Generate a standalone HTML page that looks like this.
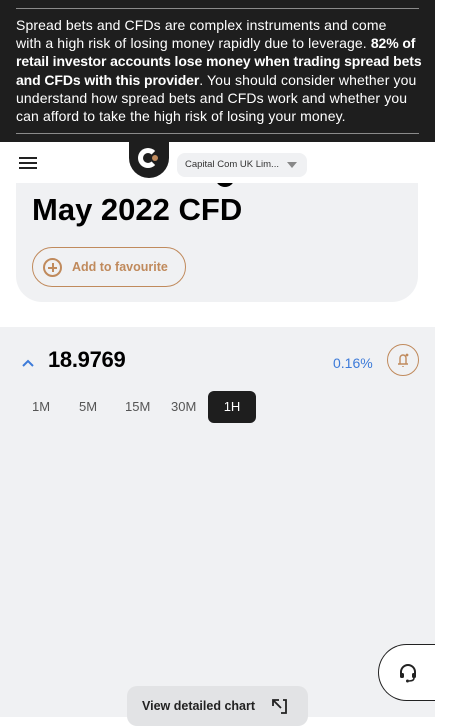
<!DOCTYPE html>
<html><head><meta charset="utf-8"><style>
*{margin:0;padding:0;box-sizing:border-box}
body{width:450px;height:717px;overflow:hidden;background:#fff;font-family:"Liberation Sans",sans-serif;position:relative}
.banner{position:absolute;left:0;top:0;width:435px;height:142px;background:#1e1e1e;color:#fff}
.hl{position:absolute;left:16px;width:403px;height:1px;background:#8a8a8a}
.btxt{position:absolute;left:16px;top:16px;font-size:14px;line-height:18.2px;white-space:nowrap;letter-spacing:0.12px}
.btxt b{letter-spacing:-0.1px}
.hdr{position:absolute;left:0;top:142px;width:435px;height:41px;background:#fff}
.card{position:absolute;left:16px;top:183px;width:402px;height:119px;background:#f0f1f3;border-radius:0 0 26px 26px;overflow:hidden}
.sec{position:absolute;left:0;top:327px;width:435px;height:390px;background:#f0f1f3}
</style></head><body>
<div class="banner">
<div class="hl" style="top:8px"></div>
<div class="btxt">Spread bets and CFDs are complex instruments and come<br>with a high risk of losing money rapidly due to leverage. <b>82% of</b><br><b>retail investor accounts lose money when trading spread bets</b><br><b>and CFDs with this provider</b>. You should consider whether you<br>understand how spread bets and CFDs work and whether you<br>can afford to take the high risk of losing your money.</div>
<div class="hl" style="top:133px"></div>
</div>
<div class="hdr">
<div style="position:absolute;left:19px;top:15px;width:18px;height:2px;background:#222;box-shadow:0 5px 0 #222,0 10px 0 #222"></div>
<div style="position:absolute;left:129px;top:0;width:40px;height:36px;background:#1e1e1e;border-radius:0 0 20px 20px">
<div style="position:absolute;left:9px;top:6px;width:20px;height:20px;border:5px solid #fff;border-right-color:transparent;border-radius:50%"></div>
<div style="position:absolute;left:23px;top:13px;width:6px;height:6px;background:#c08a5c;border-radius:50%"></div>
</div>
<div style="position:absolute;left:177px;top:11px;width:130px;height:24px;background:#f0f1f3;border-radius:8px;font-size:9.5px;color:#333;line-height:24px;padding-left:8px">Capital Com UK Lim...<span style="position:absolute;left:110px;top:9px;border-left:5px solid transparent;border-right:5px solid transparent;border-top:6px solid #888"></span></div>
</div>
<div class="card">
<div style="position:absolute;left:200px;top:-12px;width:18px;height:16px;background:#000;border-radius:50%"></div>
<div style="position:absolute;left:16px;top:9px;font-size:31px;font-weight:bold;color:#000;letter-spacing:0">May 2022 CFD</div>
<div style="position:absolute;left:16px;top:64px;width:154px;height:40px;border:1px solid #c08a5c;border-radius:20px;color:#c08a5c;font-size:12.5px;font-weight:bold;line-height:38px;padding-left:39px">Add to favourite
<div style="position:absolute;left:10px;top:10px;width:19px;height:19px;border:2px solid #c08a5c;border-radius:50%"><div style="position:absolute;left:3px;top:6.5px;width:9px;height:2px;background:#c08a5c"></div><div style="position:absolute;left:6.5px;top:3px;width:2px;height:9px;background:#c08a5c"></div></div></div>
</div>
<div class="sec">
<svg style="position:absolute;left:22px;top:32px" width="12" height="8"><path d="M1 7 L6 2 L11 7" stroke="#3d7bd9" stroke-width="2" fill="none"/></svg>
<div style="position:absolute;left:48px;top:20px;font-size:22px;font-weight:bold;color:#000;letter-spacing:-0.3px">18.9769</div>
<div style="position:absolute;left:333px;top:28px;font-size:14px;color:#3d7bd9">0.16%</div>
<div style="position:absolute;left:387px;top:17px;width:32px;height:32px;border:1px solid #c08a5c;border-radius:50%">
<svg width="30" height="30"><path d="M10 19 H20 M12 19 V13 a3 3 0 0 1 6 0 V19 M15 21 V22" stroke="#c08a5c" stroke-width="1.4" fill="none"/><circle cx="19" cy="10" r="1.4" fill="#c08a5c"/></svg></div>
<div style="position:absolute;top:64px;left:0;font-size:13px;color:#555;line-height:32px">
<span style="position:absolute;left:32px">1M</span><span style="position:absolute;left:79px">5M</span><span style="position:absolute;left:125px">15M</span><span style="position:absolute;left:171px">30M</span>
<span style="position:absolute;left:208px;width:48px;height:32px;background:#1e1e1e;color:#fff;border-radius:6px;text-align:center">1H</span></div>
<div style="position:absolute;left:127px;top:359px;width:181px;height:40px;background:#e2e3e5;border-radius:10px;font-size:12.5px;font-weight:bold;color:#222;padding:13px 0 0 15px">View detailed chart
<svg style="position:absolute;left:144px;top:12px" width="16" height="16"><path d="M2 8 V2 H8 M2 2 L10 10 M10 15 H15 V2 H12" stroke="#222" stroke-width="1.8" fill="none"/></svg></div>
</div>
<div style="position:absolute;left:378px;top:644px;width:60px;height:57px;background:#fff;border:1px solid #222;border-right:none;border-radius:29px 0 0 29px">
<svg style="position:absolute;left:19px;top:18px" width="20" height="20"><path d="M3 11 V9 a7 7 0 0 1 14 0 V11" stroke="#222" stroke-width="2" fill="none"/><rect x="2" y="10" width="4" height="5" rx="1.5" fill="#222"/><rect x="14" y="10" width="4" height="5" rx="1.5" fill="#222"/><path d="M16 15 Q16 18 11 18" stroke="#222" stroke-width="1.6" fill="none"/><circle cx="9.5" cy="18" r="1.5" fill="#222"/></svg></div>
<div style="position:absolute;left:435px;top:0;width:15px;height:717px;background:#fff"></div>
</body></html>
